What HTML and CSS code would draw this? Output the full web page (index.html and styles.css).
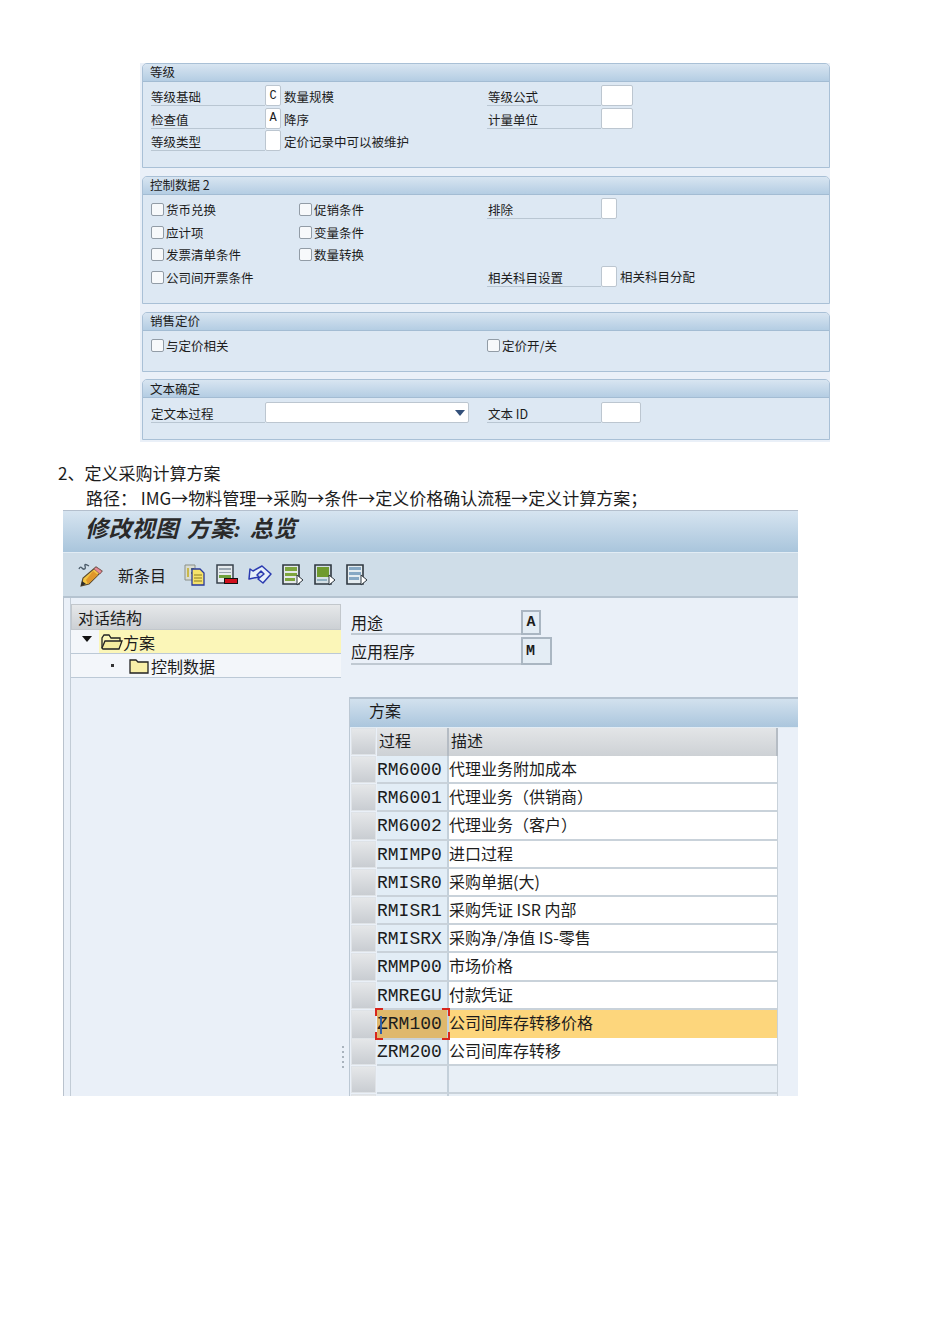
FILE: index.html
```html
<!DOCTYPE html>
<html lang="zh-CN">
    <head>
        <meta charset="UTF-8">
        <title>定义采购计算方案</title>
        <link rel="stylesheet" href="styles.css">
    </head>
    <body>
        <div class="painel">
            <div class="grupo g1">
                <div class="grupo-titulo">等级</div>
                <div class="grupo-corpo">
                    <div class="linha">
                        <div class="col-a"><span class="rotulo">等级基础</span><span class="campo">C</span><span class="txt">数量规模</span></div>
                        <div class="col-b"><span class="rotulo">等级公式</span><span class="campo largo"></span></div>
                    </div>
                    <div class="linha">
                        <div class="col-a"><span class="rotulo">检查值</span><span class="campo">A</span><span class="txt">降序</span></div>
                        <div class="col-b"><span class="rotulo">计量单位</span><span class="campo largo"></span></div>
                    </div>
                    <div class="linha">
                        <div class="col-a"><span class="rotulo">等级类型</span><span class="campo"></span><span class="txt">定价记录中可以被维护</span></div>
                    </div>
                </div>
            </div>

            <div class="grupo g2">
                <div class="grupo-titulo">控制数据 2</div>
                <div class="grupo-corpo">
                    <div class="linha">
                        <div class="col-a"><label class="chk c1"><i></i>货币兑换</label><label class="chk"><i></i>促销条件</label></div>
                        <div class="col-b"><span class="rotulo">排除</span><span class="campo"></span></div>
                    </div>
                    <div class="linha">
                        <div class="col-a"><label class="chk c1"><i></i>应计项</label><label class="chk"><i></i>变量条件</label></div>
                    </div>
                    <div class="linha">
                        <div class="col-a"><label class="chk c1"><i></i>发票清单条件</label><label class="chk"><i></i>数量转换</label></div>
                    </div>
                    <div class="linha">
                        <div class="col-a"><label class="chk c1"><i></i>公司间开票条件</label></div>
                        <div class="col-b"><span class="rotulo">相关科目设置</span><span class="campo"></span><span class="txt">相关科目分配</span></div>
                    </div>
                </div>
            </div>

            <div class="grupo g3">
                <div class="grupo-titulo">销售定价</div>
                <div class="grupo-corpo">
                    <div class="linha">
                        <div class="col-a"><label class="chk"><i></i>与定价相关</label></div>
                        <div class="col-b"><label class="chk"><i></i>定价开/关</label></div>
                    </div>
                </div>
            </div>

            <div class="grupo g4">
                <div class="grupo-titulo">文本确定</div>
                <div class="grupo-corpo">
                    <div class="linha">
                        <div class="col-a"><span class="rotulo">定文本过程</span><span class="campo combo"><svg width="10" height="6" viewBox="0 0 10 6"><path d="M0 0H10L5 6Z" fill="#33507a"/></svg></span></div>
                        <div class="col-b"><span class="rotulo">文本 ID</span><span class="campo id"></span></div>
                    </div>
                </div>
            </div>
        </div>

        <p class="passo">2、定义采购计算方案</p>
        <p class="caminho">路径： IMG→物料管理→采购→条件→定义价格确认流程→定义计算方案；</p>

        <div class="sap">
            <div class="sap-titulo">修改视图 方案: 总览</div>
            <div class="sap-barra">
                <svg class="ic-lapis" width="26" height="24" viewBox="0 0 26 24">
                    <path d="M1 6q1-3 3-1t2 1q2 0 1-3t4 0" fill="none" stroke="#4a5a68" stroke-width="1.3"/>
                    <path d="M18 4l6 4-13 13-8 2 2-8Z" fill="#f3c544" stroke="#5a4a30" stroke-width="1.1"/>
                    <path d="M15 8l5 4-10 9-2-4Z" fill="#e0962a"/>
                    <path d="M3 23l1-5 4 3Z" fill="#2c2c2c"/>
                    <path d="M18 4l6 4-2 3-6-5Z" fill="#e88a94" stroke="#8a5a60" stroke-width=".8"/>
                </svg>
                <span class="novo">新条目</span>
                <svg class="ic primeiro" width="22" height="22" viewBox="0 0 22 22">
                    <path d="M1 1h10v15H1Z" fill="#d9dcd2" stroke="#8a8f88"/>
                    <path d="M3 4h2v9H3Z" fill="#c9b84a"/>
                    <path d="M7 4h3v2H7ZM7 8h3v2H7Z" fill="#6e8a4a"/>
                    <path d="M8 5h8l4 4v12H8Z" fill="#f6e26a" stroke="#2a3a9a" stroke-width="1.3"/>
                    <path d="M10 11h8M10 14h8M10 17h8" stroke="#8a7a20"/>
                </svg>
                <svg class="ic" width="22" height="22" viewBox="0 0 22 22">
                    <path d="M1 1h16v18H1Z" fill="#e6ebee" stroke="#38424c" stroke-width="1.5"/>
                    <path d="M3 4h12v2H3ZM3 8h12v1H3Z" fill="#9aa6b0"/>
                    <path d="M3 11h12v3H3Z" fill="#6fa23e"/>
                    <path d="M8 14h14v6H8Z" fill="#111"/>
                    <path d="M9 15h12v4H9Z" fill="#d0101c"/>
                </svg>
                <svg class="ic" width="24" height="22" viewBox="0 0 24 22">
                    <path d="M14 2l9 8-8 9-5-4 6-5-3-3-4 4 2 2-10 2 1-10 3 2Z" fill="#e6f0fa" stroke="#2a3ab0" stroke-width="1.5" stroke-linejoin="round"/>
                </svg>
                <svg class="ic" width="22" height="22" viewBox="0 0 22 22">
                    <path d="M1 1h16v19H1Z" fill="#e4e8ea" stroke="#2f3840" stroke-width="1.6"/>
                    <path d="M3 3h12v4H3ZM3 9h12v3H3ZM3 14h10v3H3Z" fill="#7ea53e"/>
                    <path d="M15 11l6 5-6 5Z" fill="#fff" stroke="#2f3840"/>
                </svg>
                <svg class="ic" width="22" height="22" viewBox="0 0 22 22">
                    <path d="M1 1h16v19H1Z" fill="#d5e0e6" stroke="#2f3840" stroke-width="1.6"/>
                    <path d="M3 3h12v10H3Z" fill="#6f9a2e"/>
                    <path d="M3 15h10v2H3Z" fill="#8fb0c0"/>
                    <path d="M15 11l6 5-6 5Z" fill="#fff" stroke="#2f3840"/>
                </svg>
                <svg class="ic" width="22" height="22" viewBox="0 0 22 22">
                    <path d="M1 1h16v19H1Z" fill="#e4ecf0" stroke="#2f3840" stroke-width="1.6"/>
                    <path d="M3 3h12v3H3ZM3 8h12v3H3ZM3 13h10v3H3Z" fill="#86a8c4"/>
                    <path d="M15 11l6 5-6 5Z" fill="#fff" stroke="#2f3840"/>
                </svg>
            </div>

            <div class="sap-conteudo">
                <div class="arvore">
                    <div class="arvore-titulo">对话结构</div>
                    <div class="no aberto">
                        <svg class="seta" width="10" height="6" viewBox="0 0 10 6"><path d="M0 0H10L5 6Z" fill="#111"/></svg>
                        <div class="no-marca">
                            <svg width="22" height="16" viewBox="0 0 22 16"><path d="M1 14V4l2-3h5l2 3h9v3" fill="none" stroke="#222" stroke-width="1.3"/><path d="M1 14l3-7h17l-3 8H2Z" fill="#f6eda0" stroke="#222" stroke-width="1.3"/></svg>
                            <span>方案</span>
                        </div>
                    </div>
                    <div class="no filho">
                        <span class="ponto"></span>
                        <svg width="20" height="16" viewBox="0 0 20 16"><path d="M1 15V2h6l2 2h10v11Z" fill="#f8efa8" stroke="#222" stroke-width="1.3"/></svg>
                        <span>控制数据</span>
                    </div>
                </div>

                <div class="divisor"><i></i><i></i><i></i><i></i><i></i></div>

                <div class="direita">
                    <div class="cab cab1"><span class="cab-rotulo">用途</span><span class="cab-campo">A</span></div>
                    <div class="cab cab2"><span class="cab-rotulo">应用程序</span><span class="cab-campo m">M</span></div>

                    <div class="tabela">
                        <div class="tabela-titulo">方案</div>
                        <div class="tr topo"><div class="sel"></div><div class="th">过程</div><div class="th">描述</div></div>
                        <div class="tr"><div class="sel"></div><div class="cod">RM6000</div><div class="desc">代理业务附加成本</div></div>
                        <div class="tr"><div class="sel"></div><div class="cod">RM6001</div><div class="desc">代理业务（供销商）</div></div>
                        <div class="tr"><div class="sel"></div><div class="cod">RM6002</div><div class="desc">代理业务（客户）</div></div>
                        <div class="tr"><div class="sel"></div><div class="cod">RMIMP0</div><div class="desc">进口过程</div></div>
                        <div class="tr"><div class="sel"></div><div class="cod">RMISR0</div><div class="desc">采购单据(大)</div></div>
                        <div class="tr"><div class="sel"></div><div class="cod">RMISR1</div><div class="desc">采购凭证 ISR 内部</div></div>
                        <div class="tr"><div class="sel"></div><div class="cod">RMISRX</div><div class="desc">采购净/净值 IS-零售</div></div>
                        <div class="tr"><div class="sel"></div><div class="cod">RMMP00</div><div class="desc">市场价格</div></div>
                        <div class="tr"><div class="sel"></div><div class="cod">RMREGU</div><div class="desc">付款凭证</div></div>
                        <div class="tr ativa"><div class="sel"></div><div class="cod">ZRM100</div><div class="desc">公司间库存转移价格</div></div>
                        <div class="tr"><div class="sel"></div><div class="cod">ZRM200</div><div class="desc">公司间库存转移</div></div>
                        <div class="tr"><div class="sel"></div><div class="cod vazia"></div><div class="desc vazia"></div></div>
                        <div class="tr"><div class="sel"></div><div class="cod vazia"></div><div class="desc vazia"></div></div>
                    </div>
                </div>
            </div>
        </div>
    </body>
</html>
```

FILE: styles.css
```css
body{
    margin: 0;
    padding-top: 62px;
    height: 1282px;
    background-color: #fff;
    color: #1c1c1c;
    font-family: "Noto Sans CJK SC", "Noto Sans", sans-serif;
    overflow: hidden;
}

/* painel superior */
.painel{
    margin-left: 140px;
    width: 690px;
    height: 379px;
    padding-left: 2px;
    box-sizing: border-box;
    background-color: #eaf0f8;
    font-size: 12.5px;
}
.grupo{
    box-sizing: border-box;
    border: 1px solid #a9c0d6;
    border-radius: 5px 5px 0 0;
    background-color: #dde8f3;
    overflow: hidden;
}
.g1{
    height: 105px;
    margin-top: 1px;
    margin-bottom: 8px;
}
.g2{
    height: 128px;
    margin-bottom: 8px;
}
.g3{
    height: 60px;
    margin-bottom: 7px;
}
.g4{
    height: 61px;
}
.grupo-titulo{
    height: 17px;
    line-height: 15px;
    padding-left: 7px;
    background: linear-gradient(#d8e5f1, #b4cde3);
    border-bottom: 1px solid #a3bcd3;
}
.g4 .grupo-titulo{
    line-height: 17px;
}
.grupo-corpo{
    padding: 3px 0 0 8px;
}
.g3 .grupo-corpo, .g4 .grupo-corpo{
    padding-top: 4px;
}
.linha{
    display: flex;
    height: 22.6px;
}
.col-a{
    display: flex;
    width: 336px;
    height: 100%;
}
.col-b{
    display: flex;
    flex: 1;
    height: 100%;
}
.rotulo{
    box-sizing: border-box;
    width: 114px;
    height: 21px;
    line-height: 23px;
    border-bottom: 1px solid #b9c6d2;
    overflow: hidden;
    white-space: nowrap;
}
.col-b .rotulo{
    padding-left: 1px;
}
.campo{
    display: flex;
    align-items: center;
    justify-content: center;
    box-sizing: border-box;
    width: 16px;
    height: 21px;
    background-color: #fff;
    border: 1px solid #bcc6d0;
    border-radius: 2px;
    font-family: "Liberation Mono", monospace;
    font-size: 12px;
}
.largo{
    width: 32px;
}
.combo{
    justify-content: flex-end;
    width: 204px;
    padding-right: 3px;
}
.id{
    width: 40px;
}
.txt{
    margin-left: 3px;
    line-height: 24px;
}
.col-b .txt{
    line-height: 22px;
}
.chk{
    display: flex;
    align-items: center;
    height: 21px;
}
.g2 .chk{
    margin-top: 1px;
}
.c1{
    width: 148px;
}
.chk i{
    box-sizing: border-box;
    width: 13px;
    height: 13px;
    margin-right: 2px;
    background-color: #f7f9fb;
    border: 1px solid #929ca6;
    border-radius: 2px;
}
.g4 .col-a{
    height: 21px;
}

/* texto */
.passo, .caminho{
    margin: 0;
    line-height: 25px;
    font-size: 17px;
    white-space: nowrap;
}
.passo{
    margin-top: 18px;
    margin-left: 58px;
}
.caminho{
    margin-left: 86px;
}

/* tela sap */
.sap{
    box-sizing: border-box;
    width: 735px;
    height: 586px;
    margin-left: 63px;
    border-top: 1px solid #b4bfcd;
    overflow: hidden;
    background-color: #eaf0f8;
}
.sap-titulo{
    box-sizing: border-box;
    height: 42px;
    padding-left: 22px;
    line-height: 38px;
    background: linear-gradient(#d6e4f0, #a9c5dc);
    border-bottom: 1px solid #e2ecf4;
    color: #2a2a2a;
    font-family: "Liberation Serif", "Noto Sans CJK SC", serif;
    font-size: 23px;
    font-weight: bold;
    font-style: italic;
    letter-spacing: .4px;
    word-spacing: 2px;
    white-space: nowrap;
}
.sap-barra{
    display: flex;
    align-items: center;
    box-sizing: border-box;
    height: 45px;
    padding-left: 15px;
    background-color: #cfdde8;
    border-bottom: 2px solid #b5c3d0;
}
.novo{
    margin-left: 14px;
    margin-right: 18px;
    font-size: 16px;
    line-height: 38px;
}
.ic{
    margin-left: 10px;
}
.primeiro{
    margin-left: 0;
}
.sap-conteudo{
    display: flex;
    height: 499px;
    padding-left: 6px;
    border-left: 1px solid #b9c2cd;
    box-sizing: border-box;
}

/* arvore */
.arvore{
    width: 271px;
    padding-top: 6px;
    font-size: 16px;
    flex-shrink: 0;
    border-left: 1px solid #c2ccd6;
    box-sizing: border-box;
}
.arvore-titulo{
    box-sizing: border-box;
    height: 26px;
    padding-left: 6px;
    line-height: 25px;
    background: linear-gradient(#e6e8ea, #ccd0d4);
    border: 1px solid #c2c7cc;
}
.no{
    display: flex;
    align-items: center;
    box-sizing: border-box;
    height: 24px;
    border-bottom: 1px solid #bcc9d6;
    background-color: #f3f6fa;
    white-space: nowrap;
}
.seta{
    margin-left: 11px;
    margin-bottom: 6px;
}
.no-marca{
    display: flex;
    align-items: center;
    flex: 1;
    height: 100%;
    margin-left: 7px;
    padding-left: 2px;
    background-color: #fbf6b8;
}
.filho svg{
    margin-left: 15px;
    margin-right: 2px;
}
.ponto{
    width: 3px;
    height: 3px;
    margin-left: 40px;
    background-color: #333;
}

/* divisor */
.divisor{
    display: flex;
    flex-direction: column;
    justify-content: flex-end;
    gap: 3px;
    width: 7px;
    padding: 0 0 29px 1px;
    box-sizing: border-box;
    flex-shrink: 0;
}
.divisor i{
    width: 2px;
    height: 2px;
    background-color: #a9b3bd;
}

/* coluna da direita */
.direita{
    flex: 1;
    font-size: 16px;
    white-space: nowrap;
}
.cab{
    display: flex;
    margin-left: 3px;
}
.cab1{
    margin-top: 12px;
    height: 25px;
}
.cab2{
    margin-top: 2px;
    height: 28px;
}
.cab-rotulo{
    box-sizing: border-box;
    width: 170px;
    line-height: 29px;
    border-bottom: 2px solid #c0c9d2;
}
.cab1 .cab-rotulo{
    line-height: 25px;
    height: 25px;
}
.cab-campo{
    display: flex;
    align-items: center;
    justify-content: center;
    box-sizing: border-box;
    width: 20px;
    border: 2px solid #aab6c2;
    background-color: #e4edf5;
    font-family: "Liberation Mono", monospace;
    font-size: 15px;
    font-weight: bold;
}
.m{
    width: 31px;
    justify-content: flex-start;
    padding-left: 3px;
}
.tabela{
    margin-top: 32px;
    margin-left: 1px;
    border-left: 1px solid #bcc8d4;
}
.tabela-titulo{
    box-sizing: border-box;
    height: 31px;
    padding-left: 19px;
    line-height: 23px;
    background: linear-gradient(#d2e1ee, #abc6dd);
    border-top: 2px solid #b4c2d0;
    border-bottom: 1px solid #e2ecf4;
}
.tr{
    display: grid;
    grid-template-columns: 26px 72px 329px;
    height: 28.2px;
    padding-left: 1px;
}
.topo{
    height: 28px;
}
.sel{
    margin-bottom: 1px;
    margin-right: 1px;
    background: linear-gradient(#e5e7e9, #c9cdd2);
    border: 1px solid #dfe3e7;
    box-sizing: border-box;
}
.th{
    box-sizing: border-box;
    padding-left: 2px;
    line-height: 24px;
    background: linear-gradient(#e3e5e7, #cdd1d5);
    border-right: 2px solid #b5bcc4;
}
.cod, .desc{
    box-sizing: border-box;
    border-bottom: 2px solid #c9d2da;
    line-height: 25px;
    overflow: hidden;
}
.cod{
    background-color: #e2edf6;
    border-right: 2px solid #c4d0da;
    font-family: "Liberation Mono", monospace;
    font-size: 18px;
    line-height: 28px;
}
.desc{
    background-color: #fff;
    border-right: 1px solid #c9d2da;
}
.vazia{
    background-color: #e8eff6;
}
.ativa .cod{
    position: relative;
    background-color: #dfb86c;
    overflow: visible;
}
.ativa .desc{
    background-color: #fdd67c;
}
.ativa .cod::before{
    content: "";
    position: absolute;
    left: 3px;
    top: 6px;
    width: 2px;
    height: 18px;
    background-color: #2f5fa8;
}
.ativa .cod::after{
    content: "";
    position: absolute;
    left: -2px;
    right: -3px;
    top: -2px;
    bottom: -2px;
    background:
        linear-gradient(#d8261c, #d8261c) left top / 8px 2px no-repeat,
        linear-gradient(#d8261c, #d8261c) left top / 2px 8px no-repeat,
        linear-gradient(#d8261c, #d8261c) right top / 8px 2px no-repeat,
        linear-gradient(#d8261c, #d8261c) right top / 2px 8px no-repeat,
        linear-gradient(#d8261c, #d8261c) left bottom / 8px 2px no-repeat,
        linear-gradient(#d8261c, #d8261c) left bottom / 2px 8px no-repeat,
        linear-gradient(#d8261c, #d8261c) right bottom / 8px 2px no-repeat,
        linear-gradient(#d8261c, #d8261c) right bottom / 2px 8px no-repeat;
}
```
